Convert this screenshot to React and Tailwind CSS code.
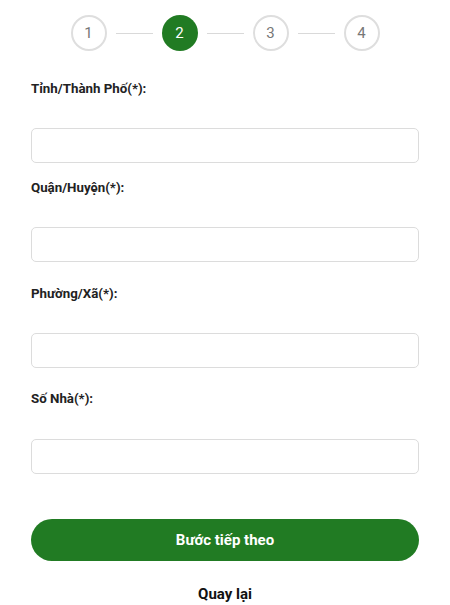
export default function App() {
  const steps = [1, 2, 3, 4];
  return (
    <div className="w-[450px] h-[605px] bg-white overflow-hidden px-[31px] pt-[15px]" style={{ fontFamily: "Roboto, 'Noto Sans', sans-serif" }}>
      <div className="flex items-center justify-center">
        {steps.map((s, i) => (
          <div key={s} className="flex items-center">
            {i > 0 && <div className="w-[37px] h-px bg-[#d9d9d9] mx-[9px]" />}
            {s === 2 ? (
              <div className="w-[36px] h-[36px] rounded-full bg-[#217b23] flex items-center justify-center text-white text-[15px]">{s}</div>
            ) : (
              <div className="w-[36px] h-[36px] rounded-full border-2 border-[#dedede] flex items-center justify-center text-[#777] text-[15px]">{s}</div>
            )}
          </div>
        ))}
      </div>

      <div className="mt-[28px] h-[20px] leading-[20px] text-[13.3px] font-bold text-[#222]">Tỉnh/Thành Phố(*):</div>
      <input className="mt-[29px] block w-full h-[35px] border border-[#dcdcdc] rounded-[5px] outline-none" />

      <div className="mt-[15px] h-[20px] leading-[20px] text-[13.3px] font-bold text-[#222]">Quận/Huyện(*):</div>
      <input className="mt-[29px] block w-full h-[35px] border border-[#dcdcdc] rounded-[5px] outline-none" />

      <div className="mt-[22px] h-[20px] leading-[20px] text-[13.3px] font-bold text-[#222]">Phường/Xã(*):</div>
      <input className="mt-[29px] block w-full h-[35px] border border-[#dcdcdc] rounded-[5px] outline-none" />

      <div className="mt-[21px] h-[20px] leading-[20px] text-[13.3px] font-bold text-[#222]">Số Nhà(*):</div>
      <input className="mt-[30px] block w-full h-[35px] border border-[#dcdcdc] rounded-[5px] outline-none" />

      <button className="mt-[45px] w-full h-[42px] rounded-full bg-[#217b23] text-white text-[15px] font-bold flex items-center justify-center">Bước tiếp theo</button>

      <div className="mt-[23px] h-[20px] leading-[20px] text-center text-[15px] font-bold text-[#111]">Quay lại</div>
    </div>
  );
}
